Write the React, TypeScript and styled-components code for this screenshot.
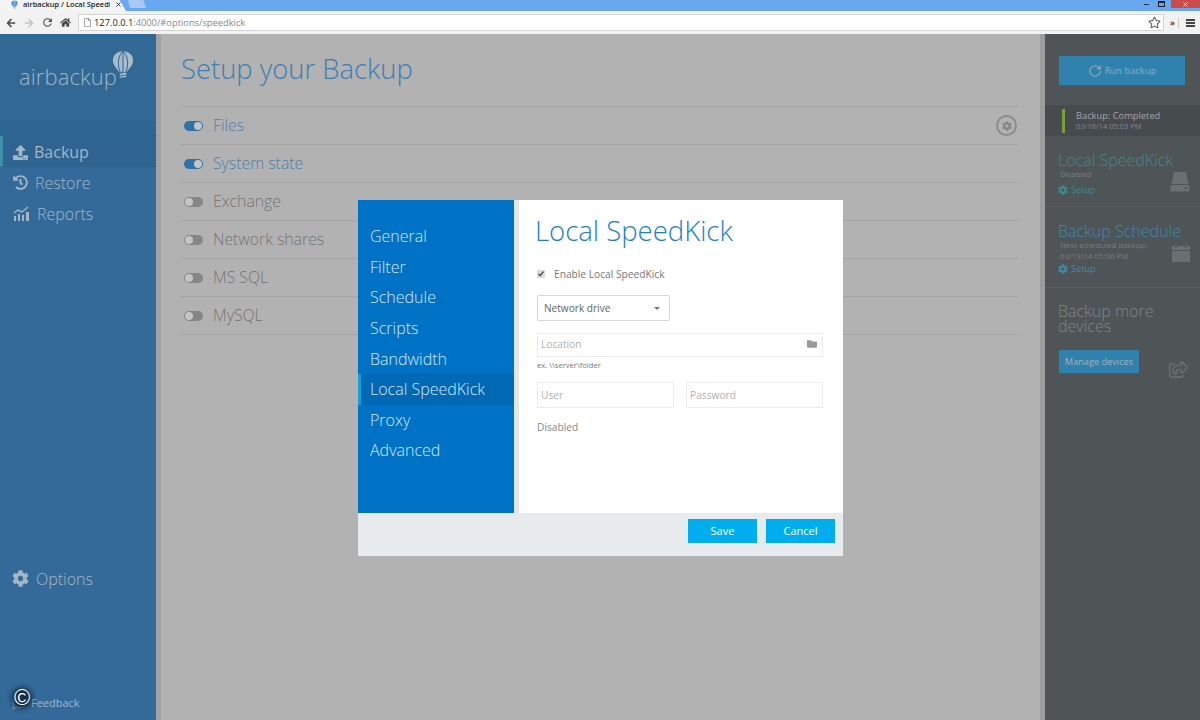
import React from "react";
import styled, { createGlobalStyle } from "styled-components";
import { FaArrowLeft, FaArrowRight, FaCog, FaFolder, FaHistory, FaHome, FaRegComment, FaRegFile, FaRegStar, FaRegShareSquare, FaUpload } from "react-icons/fa";
import { MdRefresh } from "react-icons/md";
import { RotateCw, X, Minus } from "lucide-react";

const Global = createGlobalStyle`
  html, body { margin: 0; padding: 0; height: 100%; overflow: hidden; }
  body { font-family: "Open Sans", "Noto Sans", sans-serif; background: #b2b2b2; }
  * { box-sizing: border-box; }
`;

const Page = styled.div`
  width: 1200px;
  height: 720px;
  display: flex;
  flex-direction: column;
  position: relative;
  overflow: hidden;
`;

/* browser chrome */
const TabStrip = styled.div`
  height: 11px;
  background: #69a8f1;
  display: flex;
  align-items: flex-start;
  position: relative;
`;
const Tab = styled.div`
  width: 126px;
  height: 11px;
  background: #f4f4f4;
  clip-path: polygon(0 0, 95% 0, 100% 100%, 0 100%);
  display: flex;
  align-items: center;
  padding: 0 0 2px 11px;
  font-size: 7.5px;
  line-height: 9px;
  color: #222;
  white-space: nowrap;
  overflow: hidden;
`;
const TabTitle = styled.span`
  width: 87px;
  flex: none;
  margin: 0 5px 0 5px;
  overflow: hidden;
  font-weight: 600;
`;
const NewTab = styled.div`
  width: 18px;
  height: 8px;
  margin-left: 2px;
  background: #a9c9f2;
  clip-path: polygon(0 0, 85% 0, 100% 100%, 12% 100%);
`;
const WindowButtons = styled.div`
  margin-left: auto;
  display: flex;
  height: 8px;
  align-items: center;
  color: #222;
`;
const WindowButton = styled.div<{ $close?: boolean }>`
  width: ${(p) => (p.$close ? "29px" : "15px")};
  height: 8px;
  margin-left: ${(p) => (p.$close ? "2px" : "0")};
  background: ${(p) => (p.$close ? "#cc4b4b" : "transparent")};
  color: ${(p) => (p.$close ? "#fff" : "#222")};
  display: flex;
  align-items: center;
  justify-content: center;
`;
const RestoreBox = styled.div`
  width: 7px;
  height: 6px;
  border: 1px solid #222;
  border-top-width: 2px;
`;
const Toolbar = styled.div`
  height: 23px;
  background: #f2f2f2;
  display: flex;
  align-items: center;
  padding-left: 2px;
  color: #555;
`;
const NavGlyph = styled.div<{ $faded?: boolean }>`
  width: 18px;
  display: flex;
  justify-content: center;
  color: ${(p) => (p.$faded ? "#c4c4c4" : "#4a4a4a")};
`;
const UrlBox = styled.div`
  width: 1086px;
  height: 17px;
  margin-left: 4px;
  background: #fff;
  border: 1px solid #d4d4d4;
  display: flex;
  align-items: center;
  padding: 0 0 0 4px;
  font-size: 9.3px;
  color: #888;
  gap: 2px;
`;
const UrlHost = styled.span`
  color: #222;
`;
const StarSlot = styled.div`
  margin-left: auto;
  padding-right: 2px;
  display: flex;
  color: #666;
`;
const ToolbarEnd = styled.div`
  flex: 1;
  display: flex;
  align-items: center;
  justify-content: flex-end;
  gap: 7px;
  padding-right: 5px;
  font-size: 8px;
  font-weight: 700;
  color: #444;
`;
const Overflow = styled.span`
  padding-right: 3px;
  border-right: 1px solid #ccc;
  line-height: 10px;
`;
const Burger = styled.div`
  width: 9px;
  height: 8px;
  border-top: 2px solid #444;
  border-bottom: 2px solid #444;
  position: relative;
  &::after {
    content: "";
    display: block;
    height: 2px;
    margin-top: 1px;
    background: #444;
  }
`;

/* app shell */
const Shell = styled.div`
  flex: 1;
  min-height: 0;
  display: flex;
  position: relative;
`;
const Sidebar = styled.aside`
  width: 156px;
  background: #336a99;
  display: flex;
  flex-direction: column;
  color: #a3b6c6;
`;
const LogoArea = styled.div`
  height: 87px;
  padding: 16px 0 0 19px;
  display: flex;
  align-items: flex-start;
  background: #326894;
`;
const LogoWord = styled.div`
  font-size: 22px;
  font-weight: 300;
  line-height: 30px;
  margin-top: 11px;
  color: #9fb4c5;
  letter-spacing: 0.1px;
`;
const Balloon = styled.svg`
  margin-left: -5px;
  flex: none;
`;
const TabBalloon = styled(Balloon)`
  margin-left: 0;
`;
const Stripe = styled.div`
  height: 15px;
  background: #2f6593;
  border-top: 1px solid #2c5f8a;
  border-bottom: 1px solid #2c5f8a;
`;
const SideItem = styled.div<{ $active?: boolean }>`
  height: 31px;
  display: flex;
  align-items: center;
  padding-left: ${(p) => (p.$active ? "10px" : "13px")};
  padding-top: ${(p) => (p.$active ? "2px" : "0")};
  gap: ${(p) => (p.$active ? "6px" : "7px")};
  font-size: 16px;
  font-weight: ${(p) => (p.$active ? 400 : 300)};
  background: ${(p) => (p.$active ? "#2f6390" : "transparent")};
  border-left: ${(p) => (p.$active ? "3px solid #3f8fa8" : "none")};
  border-bottom: ${(p) => (p.$active ? "1px solid #2c5f8a" : "none")};
`;
const SideSpacer = styled.div`
  flex: 1;
`;
const OptionsItem = styled(SideItem)`
  margin-bottom: 101px;
  padding-left: 12px;
`;
const Feedback = styled.div`
  font-size: 11px;
  color: #a3b6c6;
  padding-left: 12px;
  margin-bottom: 10px;
  display: flex;
  align-items: center;
  gap: 5px;
`;
const FaintBubble = styled.span`
  display: flex;
  color: #6f94b3;
`;
const Rule = styled.div`
  width: 5px;
  background: #a2a2a2;
`;
const Main = styled.main`
  width: 879px;
  background: #b2b2b2;
  padding: 17px 22px 0 20px;
`;
const PageTitle = styled.h1`
  margin: 0 0 19px;
  font-size: 27.4px;
  line-height: 36px;
  font-weight: 300;
  color: #3d7fb4;
`;
const SourceList = styled.div`
  border-bottom: 1px solid #a3a3a3;
`;
const SourceRow = styled.div`
  height: 38px;
  border-top: 1px solid #a3a3a3;
  display: flex;
  align-items: center;
  padding-left: 3px;
`;
const Toggle = styled.div<{ $on?: boolean }>`
  width: 19px;
  height: 10px;
  border-radius: 5px;
  background: ${(p) => (p.$on ? "#2f72a8" : "#868686")};
  display: flex;
  align-items: center;
  justify-content: ${(p) => (p.$on ? "flex-end" : "flex-start")};
  padding: 0 1px;
  &::after {
    content: "";
    width: 8px;
    height: 8px;
    border-radius: 50%;
    background: #c4c4c4;
  }
`;
const SourceLabel = styled.span<{ $on?: boolean }>`
  margin: 0 0 2px 10px;
  font-size: 15.8px;
  font-weight: 300;
  color: ${(p) => (p.$on ? "#4f80a8" : "#747474")};
`;
const GearRing = styled.div`
  margin-left: auto;
  margin-right: 1px;
  width: 21px;
  height: 21px;
  border-radius: 50%;
  border: 2px solid #8c8c8c;
  display: flex;
  align-items: center;
  justify-content: center;
  color: #868686;
`;
const Rule2 = styled(Rule)`
  background: #9c9c9c;
`;
const RightPanel = styled.aside`
  flex: 1;
  background: #4f5557;
  display: flex;
  flex-direction: column;
`;
const RunArea = styled.div`
  height: 72px;
  padding: 22px 15px 0 14px;
  border-bottom: 1px solid #484d4f;
`;
const RunButton = styled.div`
  height: 29px;
  background: #2f82ad;
  display: flex;
  align-items: center;
  justify-content: center;
  gap: 3px;
  font-size: 9.4px;
  color: #93aab6;
`;
const StatusBand = styled.div`
  height: 30px;
  background: #464b4d;
  display: flex;
  align-items: center;
  padding-left: 17px;
  gap: 11px;
`;
const StatusMark = styled.div`
  width: 3px;
  height: 24px;
  background: #7f9c3f;
`;
const StatusText = styled.div`
  font-size: 9.3px;
  line-height: 11px;
  color: #a2a6a7;
`;
const StatusDate = styled.div`
  font-size: 7.5px;
  color: #85898b;
`;
const Card = styled.div<{ $h: number }>`
  height: ${(p) => p.$h}px;
  padding: 14px 8px 0 13px;
  border-bottom: 1px solid #585e60;
  position: relative;
`;
const CardTitle = styled.div<{ $tone: string }>`
  font-size: 16px;
  line-height: 20px;
  font-weight: 300;
  color: ${(p) => p.$tone};
  white-space: nowrap;
`;
const CardNote = styled.div`
  margin-top: -1px;
  font-size: 7.8px;
  line-height: 10.5px;
  padding-left: 2px;
  color: #777c7e;
`;
const SetupLink = styled.div<{ $tone: string; $gap: number }>`
  margin-top: ${(p) => p.$gap}px;
  display: flex;
  align-items: center;
  gap: 3px;
  font-size: 9.2px;
  line-height: 12px;
  color: ${(p) => p.$tone};
`;
const CardIcon = styled.div<{ $bottom: number }>`
  position: absolute;
  right: 10px;
  bottom: ${(p) => p.$bottom}px;
  color: #6a6f71;
  display: flex;
`;
const MoreArea = styled.div`
  padding: 16px 14px 0 13px;
  position: relative;
`;
const MoreTitle = styled.div`
  font-size: 16px;
  line-height: 15px;
  font-weight: 300;
  color: #7f8486;
`;
const ManageButton = styled.div`
  width: 80px;
  height: 23px;
  margin: 16px 0 0 1px;
  background: #2f82ad;
  color: #9fb4bf;
  font-size: 9.2px;
  display: flex;
  align-items: center;
  justify-content: center;
`;
const ShareIcon = styled.div`
  position: absolute;
  right: 12px;
  top: 72px;
  color: #686d6f;
  display: flex;
`;

/* modal */
const Overlay = styled.div`
  position: absolute;
  inset: 0;
  display: flex;
  align-items: center;
  justify-content: center;
`;
const Modal = styled.div`
  width: 485px;
  height: 356px;
  margin-left: 1px;
  margin-top: 2px;
  background: #fff;
  display: flex;
  flex-direction: column;
`;
const ModalBody = styled.div`
  flex: 1;
  min-height: 0;
  display: flex;
`;
const ModalNav = styled.nav`
  width: 156px;
  background: #0072c6;
  padding-top: 21px;
`;
const ModalNavItem = styled.div<{ $active?: boolean }>`
  height: 30.6px;
  display: flex;
  align-items: center;
  padding-left: ${(p) => (p.$active ? "9px" : "12px")};
  font-size: 16px;
  font-weight: 300;
  color: #d3e7f6;
  background: ${(p) => (p.$active ? "#0068b5" : "transparent")};
  border-left: ${(p) => (p.$active ? "3px solid #11a0dc" : "none")};
`;
const ModalGutter = styled.div`
  width: 5px;
  background: #e3e5e7;
`;
const ModalContent = styled.div`
  flex: 1;
  padding: 12px 20px 0 18px;
  color: #777;
`;
const ModalTitle = styled.h2`
  margin: 0 0 17px -2px;
  font-size: 27.5px;
  line-height: 38px;
  font-weight: 300;
  color: #1b7fcf;
`;
const CheckRow = styled.label`
  display: flex;
  align-items: center;
  font-size: 10.2px;
  line-height: 14px;
`;
const Check = styled.input`
  width: 8px;
  height: 8px;
  margin: 0 9px 0 0;
  accent-color: #dcdcdc;
`;
const SelectBox = styled.div`
  width: 133px;
  height: 26px;
  margin-top: 14px;
  border: 1px solid #d6d6d6;
  border-radius: 2px;
  display: flex;
  align-items: center;
  justify-content: space-between;
  padding: 0 9px 0 6px;
  font-size: 10.1px;
  color: #666;
`;
const Caret = styled.span`
  width: 0;
  height: 0;
  border-left: 3px solid transparent;
  border-right: 3px solid transparent;
  border-top: 3px solid #777;
`;
const Field = styled.div<{ $short?: boolean }>`
  height: ${(p) => (p.$short ? "24px" : "26px")};
  flex: 1;
  border: 1px solid #ececec;
  display: flex;
  align-items: center;
  justify-content: space-between;
  padding: 0 5px ${(p) => (p.$short ? "2px" : "0")} 3px;
  font-size: 10.2px;
  color: #b0b0b0;
`;
const LocationRow = styled.div`
  display: flex;
  margin-top: 12px;
`;
const Hint = styled.div`
  margin-top: 2px;
  font-size: 7.6px;
  line-height: 12px;
  color: #777;
`;
const CredRow = styled.div`
  display: flex;
  gap: 12px;
  margin-top: 11px;
`;
const DisabledNote = styled.div`
  margin-top: 12px;
  font-size: 10.2px;
  line-height: 14px;
  color: #888;
`;
const ModalFooter = styled.div`
  height: 43px;
  background: #e8ebee;
  display: flex;
  justify-content: flex-end;
  align-items: center;
  gap: 9px;
  padding: 0 8px 8px 0;
`;
const FooterButton = styled.button`
  width: 69px;
  height: 24px;
  border: 0;
  padding: 0;
  background: #00aeef;
  color: #fff;
  font-family: inherit;
  font-size: 11px;
`;
const Copyright = styled.div`
  position: absolute;
  left: 13px;
  top: 689px;
  width: 18px;
  height: 18px;
  border-radius: 50%;
  background: rgba(10, 25, 40, 0.75);
  box-shadow: 0 0 5px 2px rgba(10, 25, 40, 0.6);
  color: #fff;
  font-size: 22px;
  line-height: 18px;
  text-align: center;
  font-family: "Liberation Sans", sans-serif;
`;

const sources = [
  { name: "Files", on: true, gear: true },
  { name: "System state", on: true },
  { name: "Exchange" },
  { name: "Network shares" },
  { name: "MS SQL" },
  { name: "MySQL" },
];
const tabs = ["General", "Filter", "Schedule", "Scripts", "Bandwidth", "Local SpeedKick", "Proxy", "Advanced"];

const balloonShapes = (color: string, seam: string) => (
  <>
    <path fill={color} d="M12 1C5.500 1 1 5.500 1 11c0 5 4.500 9.500 7.500 13h7C18.500 20.500 23 16 23 11 23 5.500 18.500 1 12 1z" />
    <path fill="none" stroke={seam} strokeWidth="1.1" d="M9 24C6 17 5.500 7 12 1c6.500 6 6 16 3 23M12 1v23" />
    <path fill={color} d="M8.500 25.500l7-1v2l-7 1zM8.500 28.500l7-1v1.500l-7 1z" />
  </>
);

const HddIcon = () => (
  <svg width="20" height="21" viewBox="0 0 20 21" fill="currentColor">
    <path d="M4 1h12l2.500 12h-17z" />
    <rect x="0.500" y="14" width="19" height="6.500" rx="1.500" />
    <circle cx="16" cy="17.200" r="1" fill="#4f5557" />
  </svg>
);

const CalendarIcon = () => (
  <svg width="18" height="18" viewBox="0 0 18 18" fill="currentColor">
    <path d="M0 2h3v2h2V2h8v2h2V2h3v4H0zM0 7h18v11H0z" />
    <path d="M3.500 0h1v3h-1zM13.500 0h1v3h-1z" />
  </svg>
);

const ReportsIcon = () => (
  <svg width="17" height="15" viewBox="0 0 17 15" fill="currentColor">
    <path d="M1 10h2v5H1zM5 8h2v7H5zM9 9h2v6H9zM13 6h3v9h-3z" />
    <path fill="none" stroke="currentColor" strokeWidth="1.4" d="M1 7l4-3 4 2 6-5" />
  </svg>
);

export default function App() {
  return (
    <Page>
      <Global />
      <TabStrip>
        <Tab>
          <TabBalloon width={7} height={9.500} viewBox="0 0 24 32">{balloonShapes("#3b8fd6", "#f4f4f4")}</TabBalloon>
          <TabTitle>airbackup / Local SpeedKick</TabTitle>
          <X size={7} strokeWidth={3} />
        </Tab>
        <NewTab />
        <WindowButtons>
          <WindowButton><Minus size={7} strokeWidth={3} /></WindowButton>
          <WindowButton><RestoreBox /></WindowButton>
          <WindowButton $close><X size={7} strokeWidth={3} /></WindowButton>
        </WindowButtons>
      </TabStrip>
      <Toolbar>
        <NavGlyph><FaArrowLeft size={10} /></NavGlyph>
        <NavGlyph $faded><FaArrowRight size={10} /></NavGlyph>
        <NavGlyph><MdRefresh size={13} /></NavGlyph>
        <NavGlyph><FaHome size={11} /></NavGlyph>
        <UrlBox>
          <FaRegFile size={9} color="#999" />
          <span><UrlHost>127.0.0.1</UrlHost>:4000/#options/speedkick</span>
          <StarSlot><FaRegStar size={13} /></StarSlot>
        </UrlBox>
        <ToolbarEnd>
          <Overflow>»</Overflow>
          <Burger />
        </ToolbarEnd>
      </Toolbar>
      <Shell>
        <Sidebar>
          <LogoArea>
            <LogoWord>airbackup</LogoWord>
            <Balloon width={22} height={30} viewBox="0 0 24 32">{balloonShapes("#a9bccb", "#336a99")}</Balloon>
          </LogoArea>
          <Stripe />
          <SideItem $active><FaUpload size={15} />Backup</SideItem>
          <SideItem><FaHistory size={15} />Restore</SideItem>
          <SideItem><ReportsIcon />Reports</SideItem>
          <SideSpacer />
          <OptionsItem><FaCog size={17} />Options</OptionsItem>
          <Feedback><FaintBubble><FaRegComment size={14} /></FaintBubble>Feedback</Feedback>
        </Sidebar>
        <Rule />
        <Main>
          <PageTitle>Setup your Backup</PageTitle>
          <SourceList>
            {sources.map((s) => (
              <SourceRow key={s.name}>
                <Toggle $on={s.on} />
                <SourceLabel $on={s.on}>{s.name}</SourceLabel>
                {s.gear && <GearRing><FaCog size={10} /></GearRing>}
              </SourceRow>
            ))}
          </SourceList>
        </Main>
        <Rule2 />
        <RightPanel>
          <RunArea>
            <RunButton><RotateCw size={14} strokeWidth={2} />Run backup</RunButton>
          </RunArea>
          <StatusBand>
            <StatusMark />
            <StatusText>
              Backup: Completed
              <StatusDate>03/18/14 05:03 PM</StatusDate>
            </StatusText>
          </StatusBand>
          <Card $h={71}>
            <CardTitle $tone="#3c8a8a">Local SpeedKick</CardTitle>
            <CardNote>Disabled</CardNote>
            <SetupLink $tone="#3c8a8a" $gap={4}><FaCog size={10} />Setup</SetupLink>
            <CardIcon $bottom={14}><HddIcon /></CardIcon>
          </Card>
          <Card $h={81}>
            <CardTitle $tone="#3f87a8">Backup Schedule</CardTitle>
            <CardNote>Next scheduled backup:<br />03/19/14 05:00 PM</CardNote>
            <SetupLink $tone="#3f87a8" $gap={2}><FaCog size={10} />Setup</SetupLink>
            <CardIcon $bottom={25}><CalendarIcon /></CardIcon>
          </Card>
          <MoreArea>
            <MoreTitle>Backup more<br />devices</MoreTitle>
            <ManageButton>Manage devices</ManageButton>
            <ShareIcon><FaRegShareSquare size={19} /></ShareIcon>
          </MoreArea>
        </RightPanel>
        <Overlay>
          <Modal>
            <ModalBody>
              <ModalNav>
                {tabs.map((t) => (
                  <ModalNavItem key={t} $active={t === "Local SpeedKick"}>{t}</ModalNavItem>
                ))}
              </ModalNav>
              <ModalGutter />
              <ModalContent>
                <ModalTitle>Local SpeedKick</ModalTitle>
                <CheckRow>
                  <Check type="checkbox" defaultChecked />
                  Enable Local SpeedKick
                </CheckRow>
                <SelectBox>Network drive<Caret /></SelectBox>
                <LocationRow>
                  <Field $short>Location<FaFolder size={10} color="#999" /></Field>
                </LocationRow>
                <Hint>ex. \\server\folder</Hint>
                <CredRow>
                  <Field>User</Field>
                  <Field>Password</Field>
                </CredRow>
                <DisabledNote>Disabled</DisabledNote>
              </ModalContent>
            </ModalBody>
            <ModalFooter>
              <FooterButton>Save</FooterButton>
              <FooterButton>Cancel</FooterButton>
            </ModalFooter>
          </Modal>
        </Overlay>
      </Shell>
      <Copyright>©</Copyright>
    </Page>
  );
}
